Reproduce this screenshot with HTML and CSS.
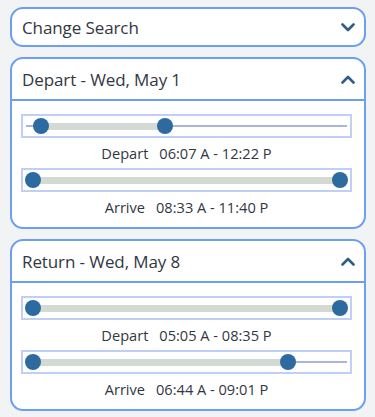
FILE: index.html
```html
<!DOCTYPE html>
<html>
<head>
<meta charset="utf-8">
<link rel="stylesheet" href="styles.css">
</head>
<body>
<div class="page">
  <div class="card">
    <div class="card-head closed">
      <span class="title">Change Search</span>
      <svg class="chev" width="14" height="9" viewBox="0 0 14 9"><path d="M1.5 1.5 L7 7 L12.5 1.5" fill="none" stroke="#2f5d8c" stroke-width="2.6" stroke-linecap="round" stroke-linejoin="round"/></svg>
    </div>
  </div>

  <div class="card">
    <div class="card-head">
      <span class="title">Depart - Wed, May 1</span>
      <svg class="chev" width="14" height="9" viewBox="0 0 14 9"><path d="M1.5 7.5 L7 2 L12.5 7.5" fill="none" stroke="#2f5d8c" stroke-width="2.6" stroke-linecap="round" stroke-linejoin="round"/></svg>
    </div>
    <div class="card-body">
      <div class="slider">
        <div class="track"></div>
        <div class="rail">
          <div class="sel" style="left: 2.6%; width: 40.5%;"></div>
          <div class="thumb" style="left: 2.6%;"></div>
          <div class="thumb" style="left: 43.1%;"></div>
        </div>
      </div>
      <div class="range-label"><span>Depart</span><span>06:07 A - 12:22 P</span></div>
      <div class="slider">
        <div class="track"></div>
        <div class="rail">
          <div class="sel" style="left: 0%; width: 100%;"></div>
          <div class="thumb" style="left: 0%;"></div>
          <div class="thumb" style="left: 100%;"></div>
        </div>
      </div>
      <div class="range-label"><span>Arrive</span><span>08:33 A - 11:40 P</span></div>
    </div>
  </div>

  <div class="card">
    <div class="card-head">
      <span class="title">Return - Wed, May 8</span>
      <svg class="chev" width="14" height="9" viewBox="0 0 14 9"><path d="M1.5 7.5 L7 2 L12.5 7.5" fill="none" stroke="#2f5d8c" stroke-width="2.6" stroke-linecap="round" stroke-linejoin="round"/></svg>
    </div>
    <div class="card-body">
      <div class="slider">
        <div class="track"></div>
        <div class="rail">
          <div class="sel" style="left: 0%; width: 100%;"></div>
          <div class="thumb" style="left: 0%;"></div>
          <div class="thumb" style="left: 100%;"></div>
        </div>
      </div>
      <div class="range-label"><span>Depart</span><span>05:05 A - 08:35 P</span></div>
      <div class="slider">
        <div class="track"></div>
        <div class="rail">
          <div class="sel" style="left: 0%; width: 83%;"></div>
          <div class="thumb" style="left: 0%;"></div>
          <div class="thumb" style="left: 83%;"></div>
        </div>
      </div>
      <div class="range-label"><span>Arrive</span><span>06:44 A - 09:01 P</span></div>
    </div>
  </div>
</div>
</body>
</html>
```

FILE: styles.css
```css
* { box-sizing: border-box; }
html, body { margin: 0; padding: 0; }
body {
  background: #f2f3f5;
  font-family: "Open Sans", "Noto Sans", sans-serif;
  color: #32373f;
}
.page {
  padding: 7px 9px 0 10px;
  display: flex;
  flex-direction: column;
  gap: 10px;
}
.card {
  background: #fff;
  border: 2px solid #6c9ef2;
  border-radius: 13px;
  overflow: hidden;
}
.card-head {
  height: 42px;
  display: flex;
  align-items: center;
  justify-content: space-between;
  padding: 0 9px 0 10px;
  border-bottom: 2px solid #6c9ef2;
}
.card-head.closed {
  height: 36px;
  border-bottom: none;
}
.title {
  font-size: 17px;
  letter-spacing: -0.1px;
}
.chev { display: block; }
.card-body {
  padding: 13px 12px 5px 9px;
}
.slider {
  position: relative;
  height: 24px;
  border: 2px solid #bfcff8;
}
.track {
  position: absolute;
  left: 3px;
  right: 3px;
  top: 50%;
  height: 2px;
  margin-top: -1px;
  background: #aab6d6;
}
.rail {
  position: absolute;
  left: 10px;
  right: 10px;
  top: 0;
  bottom: 0;
}
.sel {
  position: absolute;
  top: 50%;
  height: 7px;
  margin-top: -3.5px;
  background: #d2dad3;
}
.thumb {
  position: absolute;
  top: 50%;
  width: 16px;
  height: 16px;
  margin-top: -8px;
  margin-left: -8px;
  border-radius: 50%;
  background: #2c6aa0;
}
.range-label {
  height: 30px;
  display: flex;
  align-items: center;
  justify-content: center;
  gap: 11px;
  font-size: 14.6px;
}
```
